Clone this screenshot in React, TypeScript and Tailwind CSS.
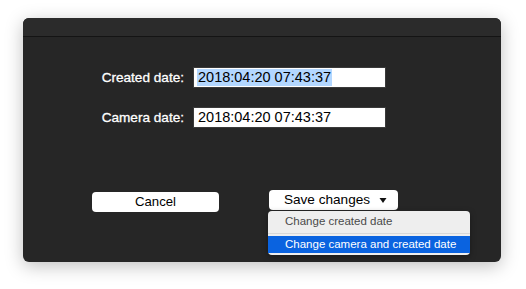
import React from "react";

const FONT = { fontFamily: '"Liberation Sans", Arial, sans-serif' };

const FIELDS = [
  { label: "Created date:", value: "2018:04:20 07:43:37", selected: true },
  { label: "Camera date:", value: "2018:04:20 07:43:37", selected: false },
];

export default function App() {
  return (
    <div className="min-h-screen bg-white pt-[18px] pl-[23px]" style={FONT}>
      <div className="w-[478px] h-[244px] rounded-[6px] bg-[#262626] shadow-[0_4px_18px_rgba(0,0,0,0.25)] flex flex-col overflow-visible">
        {/* Title bar */}
        <div className="h-[19px] rounded-t-[6px] bg-[#2b2b2b] border-b border-[#141414] shrink-0" />

        {/* Fields */}
        <div className="grid grid-cols-[161px_193px] gap-x-[9px] gap-y-[19px] pt-[30px] items-center">
          {FIELDS.map((f) => (
            <React.Fragment key={f.label}>
              <div className="text-right text-white text-[13.6px] font-normal leading-none [-webkit-text-stroke:0.3px_white]">
                {f.label}
              </div>
              <div className="h-[21px] bg-white border border-[#3a3a3a] flex items-center pl-[3px]">
                <span
                  className={`text-[14.5px] leading-[17px] text-black px-[1px] ${
                    f.selected ? "bg-[#b3d7ff]" : ""
                  }`}
                >
                  {f.value}
                </span>
              </div>
            </React.Fragment>
          ))}
        </div>

        {/* Buttons */}
        <div className="flex items-start pt-[62px] pl-[69px]">
          <button className="mt-[2px] w-[127px] h-[20px] rounded-[4px] bg-white text-black text-[13.2px] leading-none flex items-center justify-center">
            Cancel
          </button>
          <div className="relative ml-[50px]">
            <button className="w-[129px] h-[20px] rounded-[4px] bg-white text-black text-[13.6px] leading-none flex items-center justify-center gap-[9px] pl-[4px]">
              <span>Save changes</span>
              <svg width="8" height="7" viewBox="0 0 8 7">
                <path d="M0.5 1 L7.5 1 L4 6 Z" fill="#111" />
              </svg>
            </button>
            {/* Dropdown menu */}
            <div className="absolute left-[-1px] top-[21px] w-[202px] rounded-[4px] bg-[#eeeeee] shadow-[0_2px_6px_rgba(0,0,0,0.35)] pt-[1px] pb-[2px] text-[11.5px] leading-none">
              <div className="h-[19px] flex items-center pl-[17px] text-[#4a4a4a]">Change created date</div>
              <div className="my-[2px] h-[1px] bg-[#d8d8d8]" />
              <div className="mt-[2px] h-[17px] flex items-center pl-[17px] bg-[#0a63e0] text-white">
                Change camera and created date
              </div>
            </div>
          </div>
        </div>
      </div>
    </div>
  );
}
